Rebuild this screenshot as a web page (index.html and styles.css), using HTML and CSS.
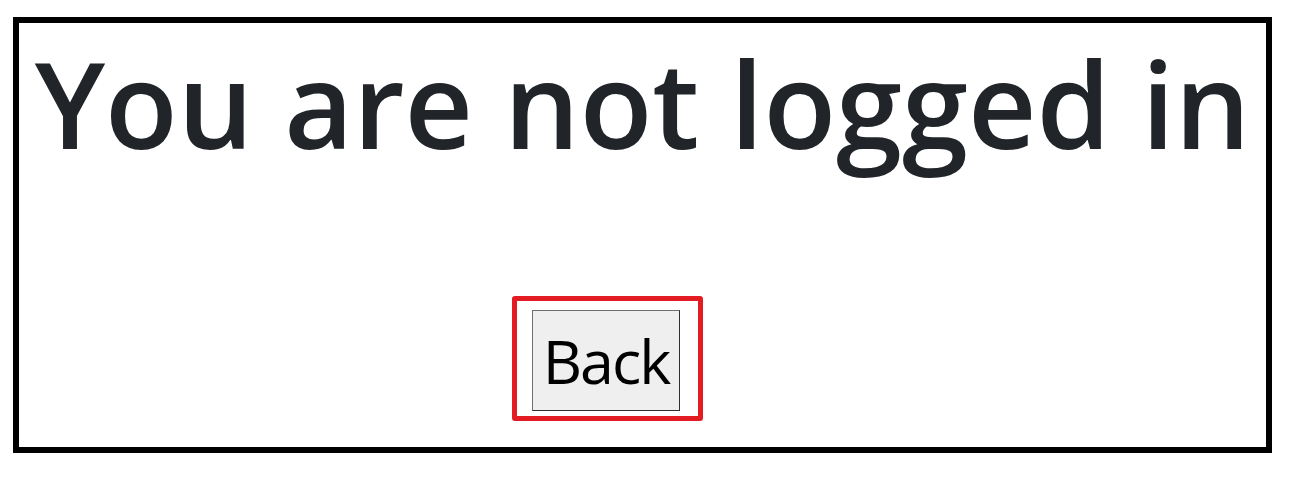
FILE: index.html
```html
<!DOCTYPE html>
<html>
<head>
<meta charset="utf-8">
<link rel="stylesheet" href="styles.css">
</head>
<body>
<div class="frame">
  <h1 class="title">You are not logged in</h1>
  <div class="actions">
    <div class="highlight">
      <button class="back" type="button">Back</button>
    </div>
  </div>
</div>
</body>
</html>
```
FILE: styles.css
```css
html, body {
  margin: 0;
  padding: 0;
  background: #fff;
}
.frame {
  box-sizing: border-box;
  margin: 17px 0 0 13px;
  width: 1259px;
  height: 436px;
  border: 6px solid #000;
  display: flex;
  flex-direction: column;
}
.title {
  margin: 9px 0 0;
  text-align: center;
  font-family: "Open Sans", "Noto Sans", sans-serif;
  font-weight: 600;
  font-size: 119px;
  line-height: 1.2;
  color: #212529;
  letter-spacing: 0;
}
.actions {
  display: flex;
  margin-top: auto;
  padding: 0 0 26px 493px;
}
.highlight {
  border: 5px solid #e31b23;
  border-radius: 3px;
  padding: 9px 18px 5px 15px;
}
.back {
  display: block;
  box-sizing: border-box;
  width: 148px;
  height: 101px;
  margin: 0;
  padding: 0;
  background: #efefef;
  border: 1px solid #6f6f6f;
  border-bottom-color: #2f2f2f;
  border-right-color: #2f2f2f;
  border-radius: 0;
  font-family: "Open Sans", "Noto Sans", sans-serif;
  font-size: 61px;
  font-weight: 400;
  letter-spacing: -2px;
  color: #000;
  line-height: 1;
}
```
